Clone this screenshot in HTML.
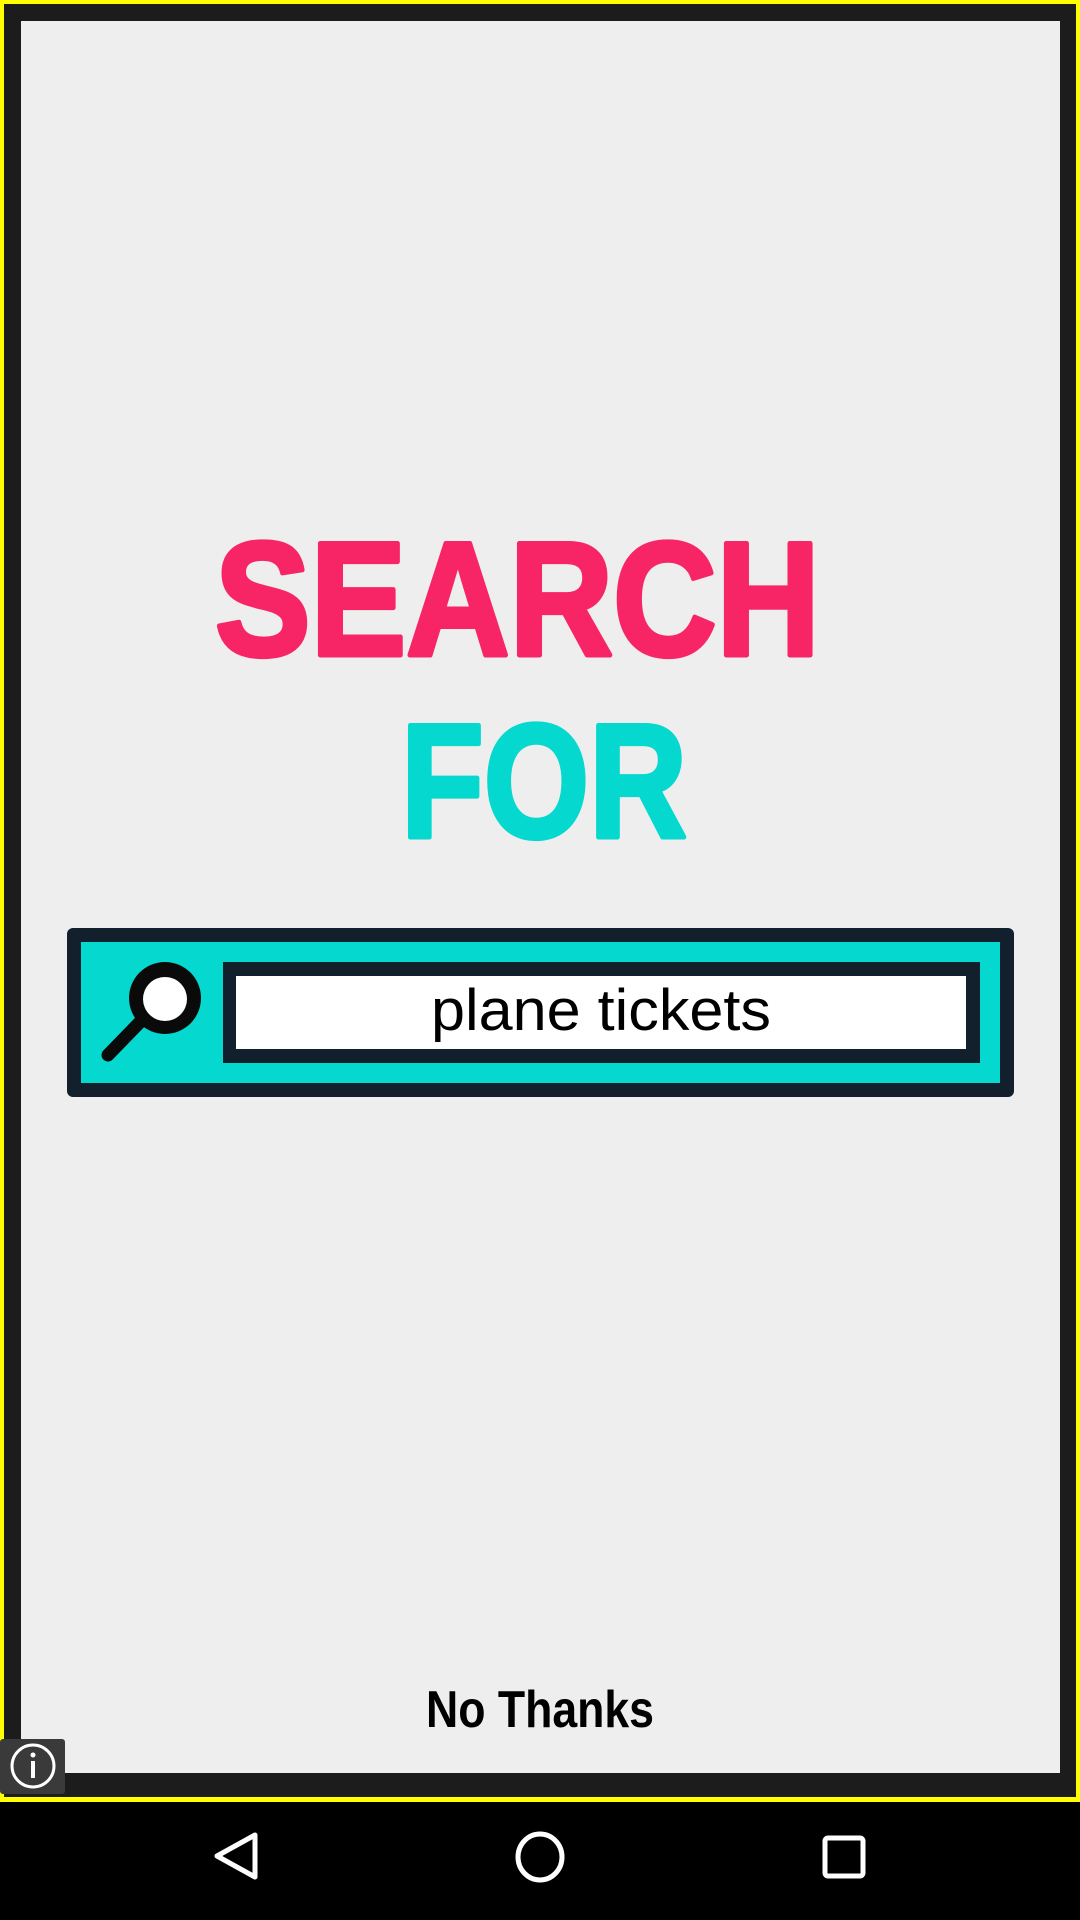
<!DOCTYPE html>
<html><head><meta charset="utf-8"><style>
html,body{margin:0;padding:0}
body{width:1080px;height:1920px;position:relative;background:#000;overflow:hidden;font-family:"Liberation Sans",sans-serif}
</style></head><body>
<svg width="1080" height="1920" viewBox="0 0 1080 1920" style="position:absolute;left:0;top:0">
<rect x="0" y="0" width="1080" height="1802" fill="#ffff00"/>
<rect x="4" y="4" width="1072" height="1793" fill="#1c1c1c"/>
<rect x="21" y="21" width="1039" height="1752" fill="#eeeeee"/>
<text x="215" y="655" font-family="Liberation Sans" font-weight="bold" font-size="162" fill="#f72566" stroke="#f72566" stroke-width="5" stroke-linejoin="round" textLength="605" lengthAdjust="spacingAndGlyphs">SEARCH</text>
<text x="401" y="837" font-family="Liberation Sans" font-weight="bold" font-size="162" fill="#05d8cf" stroke="#05d8cf" stroke-width="5" stroke-linejoin="round" textLength="286" lengthAdjust="spacingAndGlyphs">FOR</text>
<rect x="67" y="928" width="947" height="169" rx="6" fill="#12202d"/>
<rect x="81" y="942" width="919" height="141" fill="#05d8cf"/>
<rect x="223" y="962" width="757" height="101" fill="#12202d"/>
<rect x="236" y="976" width="730" height="73" fill="#ffffff"/>
<line x1="108" y1="1055" x2="142" y2="1020" stroke="#0a0a0a" stroke-width="13" stroke-linecap="round"/>
<circle cx="165" cy="998" r="36" fill="#0a0a0a"/>
<circle cx="165" cy="999" r="22" fill="#fff"/>
<text x="601" y="1030" text-anchor="middle" font-family="Liberation Sans" font-size="58" fill="#000" textLength="340" lengthAdjust="spacingAndGlyphs">plane tickets</text>
<text x="540" y="1727" text-anchor="middle" font-family="Liberation Sans" font-weight="bold" font-size="52" fill="#000" textLength="228" lengthAdjust="spacingAndGlyphs">No Thanks</text>
<rect x="0" y="1739" width="65" height="55" rx="3" fill="#3a3a3a"/>
<circle cx="33" cy="1766" r="21" fill="none" stroke="#fff" stroke-width="3"/>
<circle cx="33" cy="1755" r="2.5" fill="#fff"/>
<rect x="31" y="1761" width="4" height="17" fill="#fff"/>
<path d="M255 1835 L217 1856 L255 1877 Z" fill="none" stroke="#fff" stroke-width="5" stroke-linejoin="round"/>
<ellipse cx="540" cy="1857" rx="22" ry="23" fill="none" stroke="#fff" stroke-width="5"/>
<rect x="825" y="1838" width="38" height="38" rx="3" fill="none" stroke="#fff" stroke-width="5"/>
</svg>
</body></html>
